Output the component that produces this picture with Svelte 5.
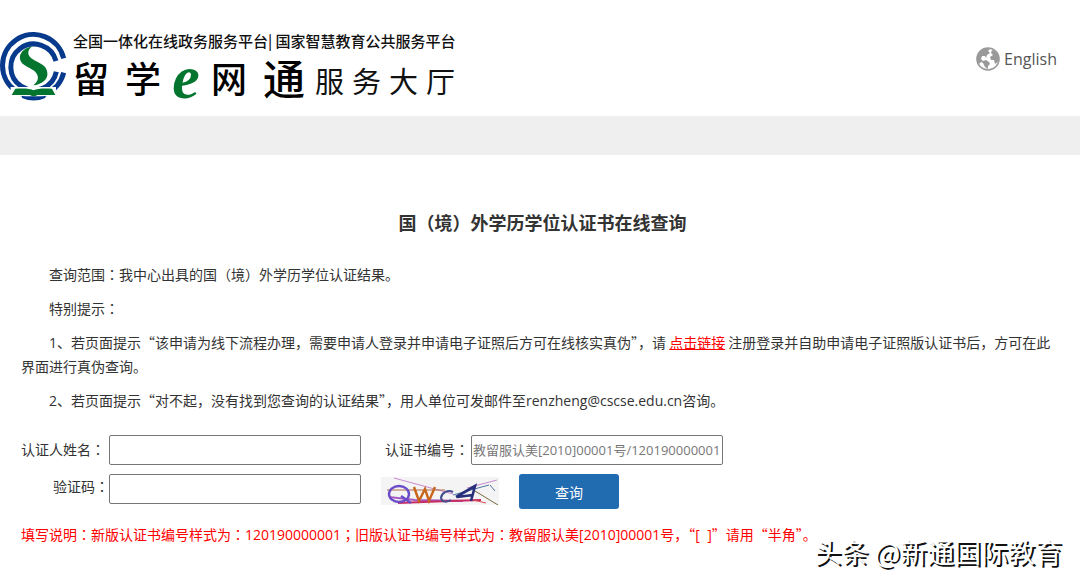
<script>
  let holder = $state('');
  let number = $state('');
  let code = $state('');

  // Splits a string into runs: latin text, full-width colons and stops, and Chinese text.
  function runs(text) {
    return text.split(/([0-9A-Za-z@.[\]\u00a0]+|[：；])/).filter((t) => t !== '').map((t) => ({
      t,
      kind: /^[：；]$/.test(t) ? 'mark' : /^[0-9A-Za-z@.[\]\u00a0]+$/.test(t) ? 'latin' : ''
    }));
  }
</script>

{#snippet mixed(text)}{#each runs(text) as r}{#if r.kind === 'mark'}<span class="mark" lang="ja">{r.t}</span>{:else if r.kind}<span class="latin">{r.t}</span>{:else}{r.t}{/if}{/each}{/snippet}

<div class="page" lang="zh-CN">
  <header>
    <div class="brand">
      <svg class="emblem" viewBox="0 0 201 210" aria-hidden="true">
        <g fill="none" stroke="#073a8c">
          <path stroke-width="15" d="M191 79A93 93 0 1 0 191 122" />
          <path stroke-width="15" d="M168 87A69 69 0 1 0 169 119" />
        </g>
        <path fill="#04752f" d="M97 43C70 49 57 65 60 82C65 104 96 107 108 122C119 136 113 151 99 160C125 158 145 142 142 122C140 96 111 93 94 79C80 67 83 53 97 43Z" />
        <path fill="#fff" d="M32 165H168V193H32Z" />
        <path fill="#073a8c" d="M66 191Q101 207 136 191V198Q101 213 66 198Z" />
        <path fill="#04752f" d="M46 170C70 169 91 169 101 175C111 169 132 169 156 170L166 189H112Q101 197 90 189H35Z" />
      </svg>
      <div class="names">
        <div class="tagline">全国一体化在线政务服务平台| 国家智慧教育公共服务平台</div>
        <div class="title">
          <div class="script"><span>留</span><span>学</span><em>e</em><span>网</span><span class="wide">通</span></div>
          <div class="hall"><span>服</span><span>务</span><span>大</span><span>厅</span></div>
        </div>
      </div>
    </div>
    <a class="language" href="#english">
      <svg viewBox="0 0 24 24" aria-hidden="true">
        <circle cx="12" cy="12" r="11" fill="#fff" stroke="#999" stroke-width="1.6" />
        <path fill="#999" d="M11 1C5 1 1 6 1 12C1 14 2 16 3 17L5 15L7 16L9 20L12 22L12 19L14 17L13 15L10 13L7 14L5 12L6 9L9 9L10 11L11 8L14 6L12 4L14 2ZM16 3L15 6L17 8L14 10L15 13L18 13L19 17C21 16 23 14 23 11C22 7 20 4 16 3Z" />
      </svg>
      <span>English</span>
    </a>
  </header>
  <nav></nav>

  <main>
    <h1>国（境）外学历学位认证书在线查询</h1>
    <p>{@render mixed('查询范围：我中心出具的国（境）外学历学位认证结果。')}</p>
    <p>{@render mixed('特别提示：')}</p>
    <p>{@render mixed('1、若页面提示“该申请为线下流程办理，需要申请人登录并申请电子证照后方可在线核实真伪”，请')} <a href="#register">点击链接</a> {@render mixed('注册登录并自助申请电子证照版认证书后，方可在此界面进行真伪查询。')}</p>
    <p>{@render mixed('2、若页面提示“对不起，没有找到您查询的认证结果”，用人单位可发邮件至renzheng@cscse.edu.cn咨询。')}</p>

    <form onsubmit={(e) => e.preventDefault()}>
      <div class="row">
        <label class="first" for="holder">{@render mixed('认证人姓名：')}</label>
        <input id="holder" type="text" bind:value={holder} />
        <label class="second" for="number">{@render mixed('认证书编号：')}</label>
        <input id="number" type="text" placeholder="教留服认美[2010]00001号/120190000001" bind:value={number} />
      </div>
      <div class="row">
        <label class="first end" for="code">{@render mixed('验证码：')}</label>
        <input id="code" type="text" bind:value={code} />
        <svg class="captcha" viewBox="0 0 118 28">
          <rect width="118" height="28" fill="#f4f4f4" />
          <g fill="none" stroke-width="1">
            <path stroke="#c98bd0" d="M13 1L72 17M86 11L116 3" />
            <path stroke="#b06a4a" d="M6 13H64" />
            <path stroke="#a45cc0" stroke-width="2" d="M8 20L34 23L82 24" />
            <path stroke="#c72b62" stroke-width="2" d="M17 26L68 24L100 23" />
            <path stroke="#d84a55" d="M92 23L105 26" />
            <path stroke="#776a40" d="M94 14L117 28" />
            <path stroke="#4b77a0" d="M109 8L114 14M72 18L97 11L108 8" />
          </g>
          <ellipse cx="18" cy="17" rx="10" ry="8" fill="none" stroke="#6a4cc8" stroke-width="2.4" />
          <path d="M20 19L30 26" stroke="#6a4cc8" stroke-width="2.4" />
          <path d="M33 10L38 24L44 12L48 24L54 10" fill="none" stroke="#c8651c" stroke-width="2.4" />
          <path d="M72 15C66 12 60 17 60 21C61 26 67 25 70 23" fill="none" stroke="#46508c" stroke-width="2" />
          <path d="M75 20L94 9L90 24M76 20L92 18" fill="none" stroke="#28307c" stroke-width="2.6" />
        </svg>
        <button type="submit">查询</button>
      </div>
    </form>
    <div class="note">{@render mixed('填写说明：新版认证书编号样式为：120190000001；旧版认证书编号样式为：教留服认美[2010]00001号，“[\u00a0\u00a0]”请用“半角”。')}</div>
  </main>
  <div class="watermark">头条 @新通国际教育</div>
</div>

<style>
  :global(body) { margin: 0; background: #fff; }
  .page {
    position: relative;
    padding-bottom: 38px;
    color: #333;
    font: 14px/24px "Noto Sans CJK SC", sans-serif;
  }
  .latin { font-family: "Open Sans", "Noto Sans", sans-serif; line-height: 14px; }
  .mark { font-family: "Noto Sans CJK JP", sans-serif; line-height: 14px; }
  header {
    display: flex;
    justify-content: space-between;
    height: 84px;
    padding: 32px 23px 0 0;
  }
  .brand { display: flex; gap: 6px; }
  .emblem { width: 67px; height: 70px; }
  .tagline {
    color: #111;
    font-size: 15px;
    font-weight: 500;
    line-height: 18px;
    white-space: pre;
  }
  .title { display: flex; gap: 6px; color: #111; line-height: 54px; }
  .script { display: flex; gap: 16px; font-size: 36px; font-weight: 500; color: #000; }
  .script span { width: 36px; }
  .script em {
    width: 34px;
    margin: 0 -8px;
    color: #04752f;
    text-align: center;
    font: italic bold 62px/54px "Liberation Serif", serif;
  }
  .script .wide { width: 46px; font-size: 42px; }
  .hall { display: flex; gap: 8px; padding-top: 3px; font-size: 29px; }
  .language {
    display: flex;
    align-items: center;
    gap: 4px;
    height: 54px;
    color: #555;
    font: 16px/24px "Open Sans", sans-serif;
    text-decoration: none;
  }
  .language svg { width: 24px; height: 24px; }
  nav { height: 39px; background: #efefef; }
  main { padding: 55px 16px 0 21px; }
  h1 {
    margin: 0 0 28px;
    font-size: 18px;
    line-height: 24px;
    text-align: center;
  }
  p { margin: 0 0 10px; text-indent: 28px; }
  p a { color: #f00; text-decoration: underline; }
  form { display: grid; gap: 9px; padding-top: 13px; }
  .row { display: flex; align-items: flex-start; height: 30px; }
  label { line-height: 28px; white-space: nowrap; }
  .first { width: 88px; }
  .end { text-align: right; line-height: 24px; }
  .second { width: 86px; margin-left: 24px; }
  input {
    box-sizing: border-box;
    width: 252px;
    height: 30px;
    padding: 1px;
    border: 1px solid #767676;
    border-radius: 2px;
    background: #fff;
    color: #333;
    font: 13px/24px "Open Sans", "Noto Sans CJK SC", sans-serif;
  }
  input::placeholder { color: #777; opacity: 1; }
  .captcha { width: 118px; height: 28px; margin: 3px 20px 0; }
  button {
    width: 100px;
    height: 35px;
    padding: 0;
    border: 0;
    border-radius: 3px;
    background: #216bb1;
    color: #fff;
    font: 14px/24px "Noto Sans CJK SC", sans-serif;
  }
  .note { padding-top: 18px; color: #f00; }
  .watermark {
    position: absolute;
    right: 18px;
    bottom: 16px;
    color: #fff;
    font-size: 27px;
    line-height: 32px;
    text-shadow: 2px 2px 0 #111;
    white-space: nowrap;
  }
</style>
